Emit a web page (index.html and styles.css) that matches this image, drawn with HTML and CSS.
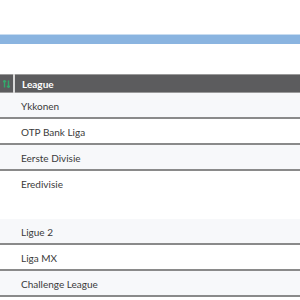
FILE: index.html
```html
<!DOCTYPE html>
<html lang="en">
<head>
    <meta charset="UTF-8">
    <meta name="viewport" content="width=device-width, initial-scale=1.0">
    <title>Leagues</title>
    <link rel="stylesheet" href="styles.css">
</head>
<body>

    <div class="page">
        <!-- Progress bar -->
        <div class="progress"></div>

        <table class="leagues">
            <thead>
                <tr>
                    <th class="sort-cell">
                        <svg width="7" height="8" viewBox="0 0 7 8">
                            <path d="M1.5 0.5 V7.5 M0 2 L1.5 0.5 L3 2" stroke="#34a86c" stroke-width="1.4" fill="none"/>
                            <path d="M5.5 0.5 V7.5 M4 6 L5.5 7.5 L7 6" stroke="#34a86c" stroke-width="1.4" fill="none"/>
                        </svg>
                    </th>
                    <th>League</th>
                </tr>
            </thead>
            <tbody>
                <tr><td></td><td>Ykkonen</td></tr>
                <tr><td></td><td>OTP Bank Liga</td></tr>
                <tr><td></td><td>Eerste Divisie</td></tr>
                <tr class="tall"><td></td><td>Eredivisie</td></tr>
                <tr><td></td><td>Ligue 2</td></tr>
                <tr><td></td><td>Liga MX</td></tr>
                <tr><td></td><td>Challenge League</td></tr>
            </tbody>
        </table>
    </div>

</body>
</html>
```

FILE: styles.css
```css
body {
    font-family: Lato, "Open Sans", sans-serif;
    background-color: #fff;
    margin: 0;
    padding: 0;
}

.page {
    padding-top: 34px;
}

.progress {
    height: 9px;
    background-color: #8ab4e0;
    border-top: 1px solid #c8dcf0;
    margin-bottom: 30px;
}

.leagues {
    width: 100%;
    border-collapse: collapse;
    font-size: 10px;
}

.leagues th {
    background-color: #5c5c5e;
    color: #fff;
    font-weight: bold;
    text-align: left;
    height: 17px;
    padding: 0 6px 0 7px;
    border-top: 1px solid #9a9a9a;
    border-bottom: 1px solid #9a9a9a;
    border-left: 2px solid #d9d9d9;
}

.leagues th.sort-cell {
    width: 14px;
    padding: 0 0 0 3px;
    border-left: none;
    box-sizing: border-box;
}

.leagues th.sort-cell svg {
    display: block;
}

.leagues td {
    color: #3a3a3a;
    padding: 2px 0 0 7px;
    height: 22px;
    border-bottom: 2px solid #8a8a8a;
    vertical-align: middle;
}

.leagues td:first-child {
    padding: 0;
}

.leagues tbody tr:nth-child(odd) {
    background-color: #f7f8fa;
}

.leagues tr.tall td {
    height: 41px;
    vertical-align: top;
    padding-top: 7px;
    border-bottom: none;
}

.leagues tr.tall td:first-child {
    padding-top: 0;
}
```
